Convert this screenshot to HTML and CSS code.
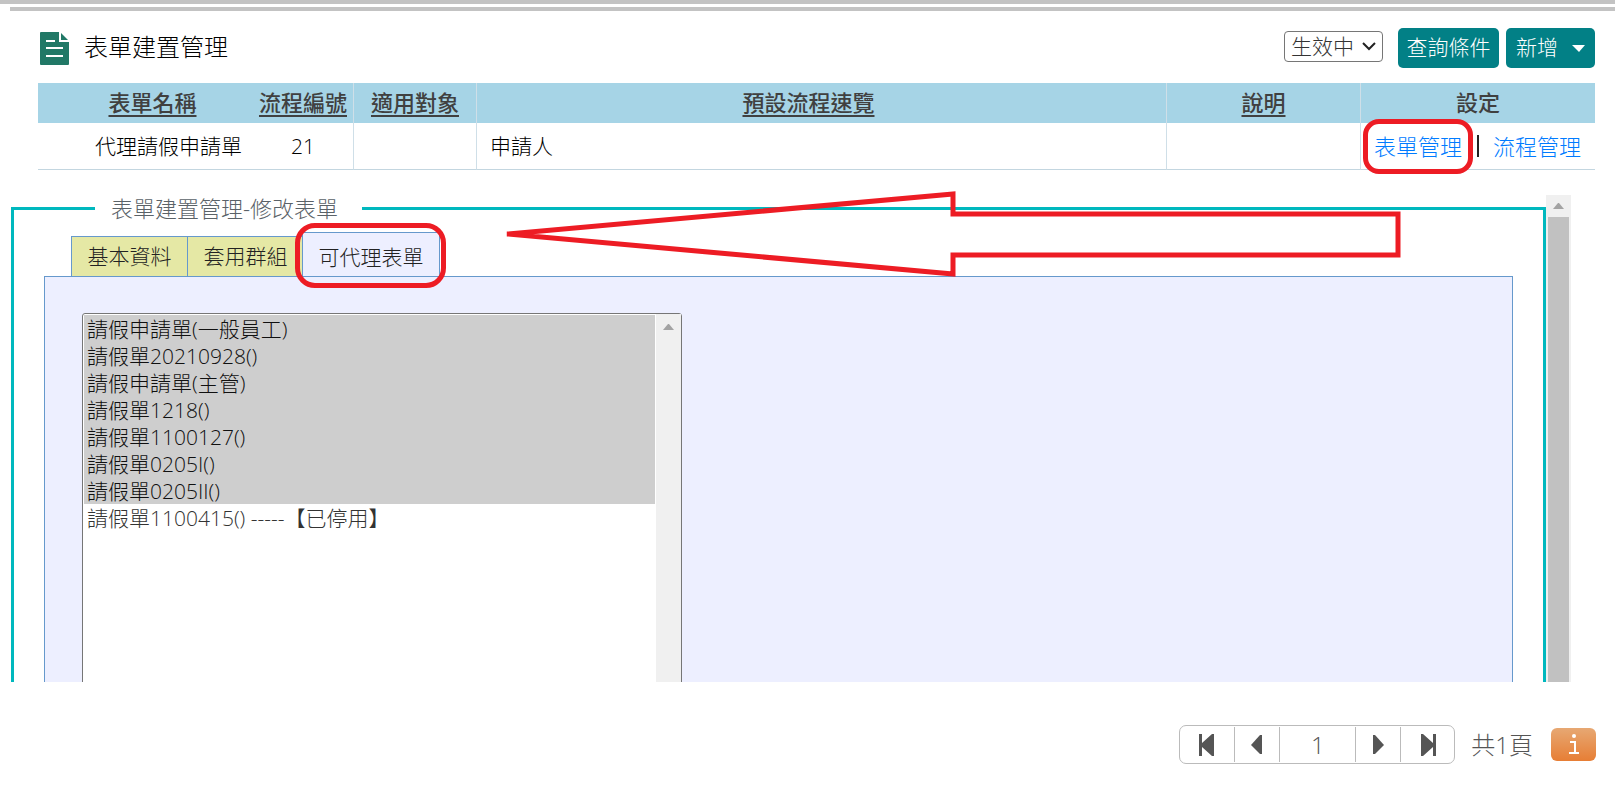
FILE: index.html
```html
<!DOCTYPE html>
<html lang="zh-Hant">
<head>
<meta charset="utf-8">
<title>表單建置管理</title>
<link rel="stylesheet" href="styles.css">
</head>
<body>
<div class="rule"></div>
<div class="rule rule-inset"></div>

<header class="topbar">
  <svg class="doc-icon" viewBox="0 0 30 33" aria-hidden="true">
    <path fill="#217866" d="M1 0H19V10H29V32Q29 33 28 33H1Q0 33 0 32V1Q0 0 1 0Z"/>
    <path fill="#217866" d="M21 1L28 8H21Z"/>
    <path stroke="#fff" stroke-width="2" d="M6 9H15M6 16H23M6 24H23"/>
  </svg>
  <h1 class="title">表單建置管理</h1>
  <div class="select-wrap">
    <select class="status" aria-label="狀態"><option>生效中</option></select>
    <svg class="chevron" viewBox="0 0 14 9" aria-hidden="true"><path d="M1 1L7 7L13 1" fill="none" stroke="#222" stroke-width="2"/></svg>
  </div>
  <button class="btn" type="button">查詢條件</button>
  <button class="btn btn-add" type="button">新增
    <svg class="caret" viewBox="0 0 13 8" aria-hidden="true"><path d="M0 0H13L7 7Z" fill="#fff"/></svg>
  </button>
</header>

<table class="grid">
  <colgroup>
    <col class="c-name"><col class="c-no"><col class="c-target"><col><col class="c-desc"><col class="c-set">
  </colgroup>
  <thead>
    <tr>
      <th class="h-name"><a href="#">表單名稱</a></th>
      <th><a href="#">流程編號</a></th>
      <th class="line"><a href="#">適用對象</a></th>
      <th class="line h-flow"><a href="#">預設流程速覽</a></th>
      <th class="line"><a href="#">說明</a></th>
      <th class="line">設定</th>
    </tr>
  </thead>
  <tbody>
    <tr>
      <td class="d-name">代理請假申請單</td>
      <td class="center">21</td>
      <td class="line"></td>
      <td class="line d-flow">申請人</td>
      <td class="line"></td>
      <td class="line">
        <div class="links">
          <a class="ringed" href="#">表單管理</a>
          <span class="bar"></span>
          <a href="#">流程管理</a>
        </div>
      </td>
    </tr>
  </tbody>
</table>

<main class="stage">
  <div class="clip">
    <fieldset class="frame">
      <legend class="legend">表單建置管理-修改表單</legend>
      <div class="tabs">
        <button class="tab" type="button">基本資料</button>
        <button class="tab" type="button">套用群組</button>
        <button class="tab tab-on" type="button">可代理表單</button>
      </div>
      <div class="panel">
        <div class="listbox">
          <select class="forms" multiple aria-label="可代理表單">
            <option selected>請假申請單(一般員工)</option>
            <option selected>請假單20210928()</option>
            <option selected>請假申請單(主管)</option>
            <option selected>請假單1218()</option>
            <option selected>請假單1100127()</option>
            <option selected>請假單0205I()</option>
            <option selected>請假單0205II()</option>
            <option>請假單1100415() -----【已停用】</option>
          </select>
          <div class="scroll"><svg class="up" viewBox="0 0 11 6" aria-hidden="true"><path d="M0 6L5 0H6L11 6Z"/></svg></div>
        </div>
      </div>
    </fieldset>
    <div class="scroll page-scroll">
      <svg class="up" viewBox="0 0 11 6" aria-hidden="true"><path d="M0 6L5 0H6L11 6Z"/></svg>
      <div class="thumb"></div>
    </div>
  </div>
  <svg class="arrow" viewBox="0 0 896 88" aria-hidden="true">
    <path d="M2 43L448 3V23H893V64H448V83Z" fill="none" stroke="#ed1c24" stroke-width="5"/>
  </svg>
</main>

<footer class="footer">
  <nav class="pager" aria-label="分頁">
    <button class="pg pg-end" type="button" aria-label="第一頁"><svg viewBox="0 0 16 22"><path d="M0 0H3V9L13 0H15V22H13L3 13V22H0Z"/></svg></button>
    <button class="pg" type="button" aria-label="上一頁"><svg viewBox="0 0 16 22"><path d="M2 11L11 1H13V20H11Z"/></svg></button>
    <input class="page-no" value="1" aria-label="頁碼">
    <button class="pg" type="button" aria-label="下一頁"><svg viewBox="0 0 16 22"><path d="M14 11L5 1H3V20H5Z"/></svg></button>
    <button class="pg pg-end" type="button" aria-label="最後一頁"><svg viewBox="0 0 16 22"><path d="M16 0H13V9L3 0H1V22H3L13 13V22H16Z"/></svg></button>
  </nav>
  <span class="total">共1頁</span>
  <button class="info" type="button" aria-label="資訊">
    <svg viewBox="0 0 10 21" aria-hidden="true"><circle cx="5" cy="2" r="2" fill="#fff"/><path d="M1 8H6V19M0 19H10" fill="none" stroke="#fff" stroke-width="2"/></svg>
  </button>
</footer>
</body>
</html>
```
FILE: styles.css
```css
* { box-sizing: border-box; }

body {
  margin: 0;
  height: 100vh;
  display: flex;
  flex-direction: column;
  background: #fff;
  color: #000;
  font-family: "Open Sans", "Noto Sans CJK TC", sans-serif;
  font-size: 21px;
  font-weight: 300;
  line-height: 27px;
}

button, select, input { font: inherit; color: inherit; margin: 0; }
button { cursor: pointer; padding: 0; }
a { color: inherit; }

.rule { flex: none; height: 4px; background: #c3c3c3; }
.rule-inset { margin: 3px 0 0 10px; }

.topbar {
  display: flex;
  align-items: center;
  height: 40px;
  margin: 17px 20px 15px 40px;
}
.doc-icon { width: 30px; height: 33px; }
.title {
  flex: 1;
  margin: 0 0 0 14px;
  padding-bottom: 4px;
  font-size: 24px;
  font-weight: 300;
}
.select-wrap { position: relative; margin: 0 15px 4px 0; }
.status {
  appearance: none;
  width: 99px;
  height: 31px;
  padding: 0 0 0 6px;
  border: 1px solid #767676;
  border-radius: 4px;
  background: #fff;
  color: #333;
  line-height: 27px;
}
.chevron { position: absolute; right: 7px; top: 11px; width: 14px; height: 9px; }
.btn {
  width: 101px;
  height: 40px;
  padding-bottom: 2px;
  border: 0;
  border-radius: 5px;
  background: #028086;
  color: #fff;
}
.btn-add {
  display: flex;
  align-items: center;
  justify-content: space-between;
  width: 89px;
  margin-left: 7px;
  padding: 0 10px 2px;
}
.caret { width: 13px; height: 8px; margin-top: 4px; }

.grid {
  flex: none;
  width: calc(100% - 58px);
  margin: 0 20px 0 38px;
  table-layout: fixed;
  border-collapse: separate;
  border-spacing: 0;
}
.c-name { width: 215px; }
.c-no { width: 100px; }
.c-target { width: 123px; }
.c-desc { width: 194px; }
.c-set { width: 235px; }
.grid th {
  height: 40px;
  padding: 0 0 2px;
  background: #a6d4e6;
  color: #404040;
  font-size: 22px;
  font-weight: 500;
}
.grid th a { text-decoration-thickness: 2px; text-underline-offset: 4px; }
.grid th.h-name { padding-left: 14px; }
.grid th.h-flow { padding-right: 26px; }
.grid td { height: 47px; padding: 0; border-bottom: 1px solid #c3d6e0; }
.grid .line { border-left: 1px solid #cfdfe8; }
.grid .center { text-align: center; }
.grid .d-name { padding-left: 57px; }
.grid .d-flow { padding-left: 13px; }
.links {
  display: flex;
  align-items: center;
  justify-content: space-between;
  padding: 0 14px 0 13px;
  color: #007bff;
  font-size: 22px;
}
.links a { text-decoration: none; }
.bar { width: 2px; height: 22px; background: #222; }
.ringed { position: relative; }
.ringed::after, .tab-on::after {
  content: "";
  position: absolute;
  border: 5px solid #ed1c24;
  border-radius: 16px;
  pointer-events: none;
}
.ringed::after { inset: -14px -11px; }

.stage {
  position: relative;
  flex: 1;
  min-height: 0;
  margin: 22px 44px 0 11px;
}
.clip { display: flex; height: 100%; overflow: hidden; }
.frame {
  flex: 1;
  min-width: 0;
  height: 800px;
  margin: 0;
  padding: 8px 30px 0;
  border: 3px solid #00b8be;
}
.legend {
  margin-left: 51px;
  padding: 0 24px 0 16px;
  color: #5a6268;
  font-size: 22px;
  line-height: 32px;
}
.scroll {
  flex: none;
  display: flex;
  flex-direction: column;
  align-items: center;
  width: 25px;
  background: #f0f0f0;
}
.page-scroll { margin-top: 3px; }
.up { width: 11px; height: 6px; margin: 8px 0; fill: #a3a3a3; }
.listbox .up { margin-top: 10px; }
.thumb { flex: 1; width: 21px; background: #c1c1c1; }

.tabs { display: flex; align-items: flex-end; padding-left: 27px; }
.tab {
  width: 116px;
  height: 40px;
  border: 1px solid #6699cc;
  border-width: 1px 0 0 1px;
  background: #e5e8a5;
  color: #222;
}
.tab-on {
  position: relative;
  width: 138px;
  height: 44px;
  margin-left: -1px;
  padding-top: 5px;
  border-right-width: 1px;
  background: #edefff;
}
.tab-on::after { inset: -10px -7px -12px -8px; border-radius: 20px; }

.panel {
  height: 700px;
  padding: 36px 37px;
  border: 1px solid #6699cc;
  background: #edefff;
}
.listbox {
  display: flex;
  width: 600px;
  height: 600px;
  border: 1px solid #767676;
  border-radius: 3px;
  background: #fff;
}
.forms {
  flex: 1;
  min-width: 0;
  height: 100%;
  padding: 1px;
  border: 0;
  background: transparent;
  color: #333;
  outline: 0;
  scrollbar-width: none;
}
.forms option {
  display: flex;
  align-items: center;
  height: 27px;
  min-height: 27px;
  padding: 0 3px 1px;
  font-weight: 300;
}
.forms option:checked {
  background: linear-gradient(#cecece, #cecece);
  color: #101010;
}

.arrow { position: absolute; left: 494px; top: -1px; width: 896px; height: 88px; }

.footer {
  display: flex;
  align-items: center;
  justify-content: flex-end;
  margin: 43px 19px 23px;
  color: #555;
  font-size: 24px;
}
.pager {
  display: flex;
  height: 39px;
  padding: 1px 0;
  border: 1px solid #bbb;
  border-radius: 7px;
}
.pg {
  display: grid;
  place-items: center;
  width: 45px;
  border: 0;
  background: none;
  fill: #555;
}
.pg-end { width: 54px; }
.pg svg { width: 16px; height: 22px; }
.pg + .pg, .page-no, .page-no + .pg { border-left: 1px solid #bbb; }
.page-no {
  width: 76px;
  padding: 0;
  border-width: 0 0 0 1px;
  background: none;
  text-align: center;
}
.total { margin: 0 18px 0 16px; }
.info {
  display: grid;
  place-items: center;
  width: 45px;
  height: 33px;
  border: 0;
  border-radius: 6px;
  background: linear-gradient(#e7a873, #e77e35);
}
.info svg { width: 10px; height: 21px; }
```
